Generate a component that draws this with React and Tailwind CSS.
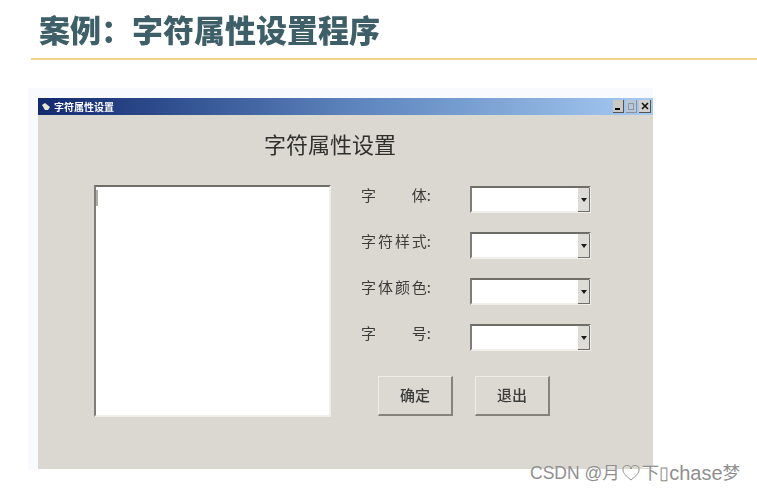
const cjk = "font-['Noto_Sans_CJK_SC','Liberation_Sans',sans-serif]";

function Sunken({ className, children }) {
  return (
    <div className={`border-t-2 border-l-2 border-t-[#6f6d68] border-l-[#7f7d77] border-r-2 border-b-2 border-r-[#f1efe9] border-b-[#f1efe9] bg-white ${className}`}>
      {children}
    </div>
  );
}

function FieldRow({ chars }) {
  return (
    <div className="flex items-center h-[27px]">
      <div className={`flex justify-between w-[70px] pb-[10px] text-[15px] leading-none text-[#3c3c3a] blur-[0.3px] ${cjk}`}>
        {chars.map((c, i) => (
          <span key={i}>{c}</span>
        ))}
      </div>
      <Sunken className="ml-[39px] w-[121px] h-[27px] flex justify-end">
        <div className="w-[12px] -mr-[1px] -mb-[1px] bg-[#dedcd6] border-r border-b border-[#6f6d68] flex items-center justify-center">
          <svg width="6" height="4" viewBox="0 0 6 4">
            <path d="M0 0h6L3 4z" fill="#1c1c1c" />
          </svg>
        </div>
      </Sunken>
    </div>
  );
}

function WinButton({ label }) {
  return (
    <button className={`w-[75px] h-[40px] bg-[#dcd9d3] border border-t-[#efede7] border-l-[#efede7] border-r-2 border-b-2 border-r-[#85837d] border-b-[#85837d] text-[15px] font-medium text-[#3c3c3a] blur-[0.3px] ${cjk}`}>
      {label}
    </button>
  );
}

export default function App() {
  return (
    <div className="relative w-[757px] h-[491px] bg-white overflow-hidden">
      <div className="ml-[31px] h-[60px] border-b-2 border-[#f1d48c]">
        <h1 className={`pl-[8px] pt-[7px] text-[31px] leading-[44px] font-extrabold text-[#3f5f68] blur-[0.3px] ${cjk}`}>
          案例：字符属性设置程序
        </h1>
      </div>

      <div className="ml-[28px] mt-[28px] w-[625px] bg-[#f8fafe] pl-[10px] pt-[10px]">
        <div className="w-[615px] h-[371px] bg-[#dbd8d1]">
          {/* title bar */}
          <div className="h-[17px] flex items-center bg-gradient-to-r from-[#14296e] via-[#5b82bb] to-[#a6cbf2] pl-[4px] pr-[2px]">
            <svg width="8" height="7" viewBox="0 0 8 7">
              <path d="M0 2l3-2 5 4-2 3H3z" fill="#e8e6d8" />
            </svg>
            <span className={`ml-[4px] text-[10px] leading-none font-bold text-white blur-[0.3px] ${cjk}`}>
              字符属性设置
            </span>
            <div className="ml-auto flex">
              <div className="w-[11px] h-[13px] bg-[#c9c8c4] border-r border-b border-[#55544f] flex items-end pl-[2px] pb-[2px]">
                <div className="w-[5px] h-[2px] bg-black" />
              </div>
              <div className="w-[11px] h-[13px] ml-[2px] bg-[#b9c6d6] border-r border-b border-[#8b8f96] flex items-center justify-center">
                <div className="w-[6px] h-[7px] border border-[#8f959e]" />
              </div>
              <div className="w-[12px] h-[13px] ml-[2px] bg-[#d2d0ca] border-r border-b border-[#55544f] flex items-center justify-center">
                <svg width="8" height="8" viewBox="0 0 8 8">
                  <path d="M1 1l6 6M7 1l-6 6" stroke="#111" strokeWidth="1.6" />
                </svg>
              </div>
            </div>
          </div>

          <h2 className={`h-[70px] pt-[11px] pl-[226px] text-[22px] leading-[34px] font-normal text-[#2f2f2d] blur-[0.3px] ${cjk}`}>
            字符属性设置
          </h2>

          <div className="flex pl-[56px]">
            <Sunken className="relative w-[237px] h-[232px]">
              <div className="absolute left-0 top-[3px] w-[2px] h-[16px] bg-[#b0aea8]" />
            </Sunken>
            <div className="ml-[30px] flex flex-col gap-[19px] pt-[1px]">
              <FieldRow chars={["字", "体:"]} />
              <FieldRow chars={["字", "符", "样", "式:"]} />
              <FieldRow chars={["字", "体", "颜", "色:"]} />
              <FieldRow chars={["字", "号:"]} />
              <div className="flex gap-[22px] pl-[17px] pt-[6px]">
                <WinButton label="确定" />
                <WinButton label="退出" />
              </div>
            </div>
          </div>
        </div>
      </div>

      <div className="absolute left-[530px] top-[461px] flex items-center text-[17.5px] leading-[24px] text-[#8f8f8f] [text-shadow:0_1px_0_#fff] font-['Liberation_Sans','Noto_Sans_CJK_SC',sans-serif]">
        <span>CSDN @月</span>
        <span className="ml-[2px] flex items-center">
          <svg width="18" height="16" viewBox="0 0 18 16">
            <path d="M9 15C4 11 1 8 1 5a4 4 0 0 1 8-1 4 4 0 0 1 8 1c0 3-3 6-8 10z" fill="none" stroke="#8f8f8f" strokeWidth="1" />
          </svg>
        </span>
        <span className="ml-[2px]">下▯</span>
        <span className="text-[20px]">chase</span>
        <span>梦</span>
      </div>
    </div>
  );
}
